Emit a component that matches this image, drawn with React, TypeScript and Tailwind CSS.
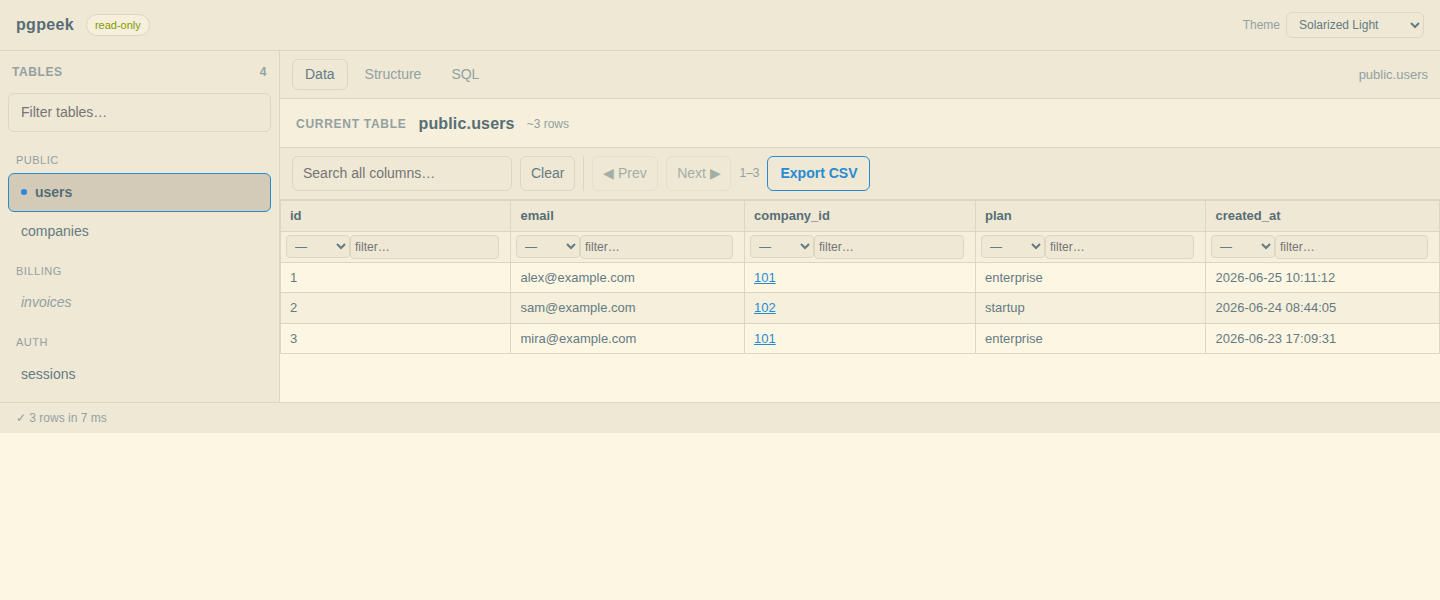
const groups = [
  { name: "public", tables: [{ name: "users", active: true }, { name: "companies" }] },
  { name: "billing", tables: [{ name: "invoices", view: true }] },
  { name: "auth", tables: [{ name: "sessions" }] },
]

const columns = ["id", "email", "company_id", "plan", "created_at"]
const columnWidths = ["w-[230px]", "w-[234px]", "w-[231px]", "w-[230px]", "w-[234px]"]

const rows = [
  { id: 1, email: "alex@example.com", companyId: 101, plan: "enterprise", createdAt: "2026-06-25 10:11:12" },
  { id: 2, email: "sam@example.com", companyId: 102, plan: "startup", createdAt: "2026-06-24 08:44:05" },
  { id: 3, email: "mira@example.com", companyId: 101, plan: "enterprise", createdAt: "2026-06-23 17:09:31" },
]

function Sidebar() {
  return (
    <aside className="w-[280px] shrink-0 border-r border-[#ddd6c1] bg-[#eee8d5]">
      <div className="flex items-center justify-between px-3 pt-[13px] pb-[13px]">
        <span className="text-xs font-bold uppercase leading-[16px] tracking-[0.6px] text-[#93a1a1]">Tables</span>
        <span className="text-xs font-bold leading-[16px] tracking-[0.6px] text-[#93a1a1]">4</span>
      </div>
      <div className="px-2">
        <input
          placeholder="Filter tables…"
          className="h-[39px] w-full rounded-md border border-[#ddd6c1] bg-[#eee8d5] px-3 pb-[2px] text-sm text-[#657b83] placeholder:text-[#757575]"
        />
      </div>
      <div className="flex flex-col gap-[6px] px-2 pt-[13px] pb-2">
        {groups.map((group) => (
          <div key={group.name}>
            <div className="px-2 pt-[8px] pb-[5.5px] text-[11px] uppercase leading-[14px] tracking-[0.5px] text-[#93a1a1]">
              {group.name}
            </div>
            {group.tables.map((table) => (
              <div
                key={table.name}
                className={
                  table.active
                    ? "flex h-[39px] items-center rounded-md border border-[#268bd2] bg-[#d3cbb7] px-3 pb-[1px] text-sm font-bold text-[#586e75]"
                    : table.view
                      ? "flex h-[38px] items-center px-[13px] text-sm italic text-[#93a1a1]"
                      : "flex h-[38px] items-center px-[13px] text-sm text-[#657b83]"
                }
              >
                {table.active && <span className="mr-2 h-[6px] w-[6px] rounded-full bg-[#268bd2]" />}
                {table.name}
              </div>
            ))}
          </div>
        ))}
      </div>
    </aside>
  )
}

function Toolbar() {
  const disabledButton = "h-[35px] rounded-md border border-[#e6dfca] pb-[1px] text-sm text-[#a5aea6]"

  return (
    <div className="flex h-[52px] items-start gap-2 border-b border-[#ddd6c1] bg-[#eee8d5] px-3 pt-2">
      <input
        placeholder="Search all columns…"
        className="h-[35px] w-[220px] rounded-md border border-[#ddd6c1] bg-[#eee8d5] px-[10px] pb-[2px] text-sm text-[#657b83] placeholder:text-[#757575]"
      />
      <button type="button" className="h-[35px] rounded-md border border-[#ddd6c1] px-[10px] pb-[1px] text-sm text-[#657b83]">
        Clear
      </button>
      <div className="h-[35px] w-px bg-[#ddd6c1]" />
      <button type="button" disabled className={`${disabledButton} w-[66px] pr-[1px]`}>
        ◀ Prev
      </button>
      <button type="button" disabled className={`${disabledButton} w-[65px]`}>
        Next ▶
      </button>
      <span className="pt-[9px] text-xs leading-[16px] text-[#93a1a1]">1–3</span>
      <button type="button" className="-ml-px h-[35px] rounded-md border border-[#268bd2] pl-[13px] pr-[11px] pb-[1px] text-sm font-bold text-[#268bd2]">
        Export CSV
      </button>
    </div>
  )
}

function DataTable() {
  const cell = "border-b border-l border-[#ddd6c1] px-[9px]"
  const offsetCell = "border-b border-l border-[#ddd6c1] pl-[9.5px] pr-[9px]"

  return (
    <table className="w-full table-fixed border-separate border-spacing-0 border-r border-[#ddd6c1] text-[13px] text-[#657b83]">
      <thead>
        <tr className="h-[32px] bg-[#eee8d5]">
          {columns.map((column, i) => (
            <th
              key={column}
              className={`${columnWidths[i]} ${i === 1 || i === 4 ? offsetCell : cell} border-t text-left font-bold text-[#586e75]`}
            >
              {column}
            </th>
          ))}
        </tr>
        <tr className="h-[31px] bg-[#f5efdc]">
          {columns.map((column) => (
            <td key={column} className="border-b border-l border-[#ddd6c1] pl-[5px] pr-[11px]">
              <div className="flex">
                <select className="h-[23px] w-[64px] shrink-0 rounded border border-[#ddd6c1] bg-[#eee8d5] pl-[4px] text-xs text-[#657b83]">
                  <option>—</option>
                </select>
                <input
                  placeholder="filter…"
                  className="h-[24px] w-full min-w-0 rounded border border-[#ddd6c1] bg-[#eee8d5] px-[4px] text-xs text-[#657b83] placeholder:text-[#757575]"
                />
              </div>
            </td>
          ))}
        </tr>
      </thead>
      <tbody>
        {rows.map((row, i) => (
          <tr key={row.id} className={i % 2 === 1 ? "h-[31px] bg-[#f5efdc]" : "h-[30px] bg-[#fdf6e3]"}>
            <td className={cell}>{row.id}</td>
            <td className={offsetCell}>{row.email}</td>
            <td className={cell}>
              <a href="#" className="text-[#268bd2] underline">
                {row.companyId}
              </a>
            </td>
            <td className={cell}>{row.plan}</td>
            <td className={offsetCell}>{row.createdAt}</td>
          </tr>
        ))}
      </tbody>
    </table>
  )
}

export default function App() {
  return (
    <div className="min-h-[600px] bg-[#fdf6e3] font-['Liberation_Sans',Arial,sans-serif]">
      <header className="flex h-[51px] items-center justify-between border-b border-[#ddd6c1] bg-[#eee8d5] pl-4 pr-4">
        <div className="flex items-center gap-3">
          <span className="text-base font-bold tracking-[0.32px] text-[#586e75]">pgpeek</span>
          <span className="rounded-full border border-[#ddd6c1] bg-[#f5efdc] px-2 py-[2px] text-[11px] text-[#859900]">
            read-only
          </span>
        </div>
        <div className="flex items-center gap-[6px]">
          <span className="text-xs text-[#93a1a1]">Theme</span>
          <select className="h-[26px] w-[138px] rounded-md border border-[#ddd6c1] bg-[#eee8d5] pl-2 text-xs text-[#657b83]">
            <option>Solarized Light</option>
          </select>
        </div>
      </header>

      <div className="flex h-[351px]">
        <Sidebar />
        <main className="min-w-0 flex-1">
          <div className="flex h-[48px] items-center justify-between border-b border-[#ddd6c1] bg-[#eee8d5] pl-3 pr-3">
            <div className="flex items-center gap-1">
              <button type="button" className="h-[31px] rounded-md border border-[#ddd6c1] px-3 pb-[1px] text-sm text-[#657b83]">
                Data
              </button>
              <button type="button" className="h-[31px] rounded-md border border-transparent px-3 pb-[1px] text-sm text-[#93a1a1]">
                Structure
              </button>
              <button type="button" className="h-[31px] rounded-md border border-transparent px-3 pb-[1px] text-sm text-[#93a1a1]">
                SQL
              </button>
            </div>
            <span className="text-[13px] text-[#93a1a1]">public.users</span>
          </div>

          <div className="flex h-[49px] items-center border-b border-[#ddd6c1] bg-[#f5efdc] px-4 pt-[1px]">
            <span className="text-xs font-bold uppercase tracking-[0.72px] text-[#93a1a1]">Current table</span>
            <span className="ml-3 text-base font-bold tracking-[0.16px] text-[#586e75]">public.users</span>
            <span className="ml-3 text-xs text-[#93a1a1]">~3 rows</span>
          </div>

          <Toolbar />
          <DataTable />
        </main>
      </div>

      <footer className="flex h-[31px] items-center border-t border-[#ddd6c1] bg-[#eee8d5] px-4 text-xs text-[#93a1a1]">
        ✓ 3 rows in 7 ms
      </footer>
    </div>
  )
}
